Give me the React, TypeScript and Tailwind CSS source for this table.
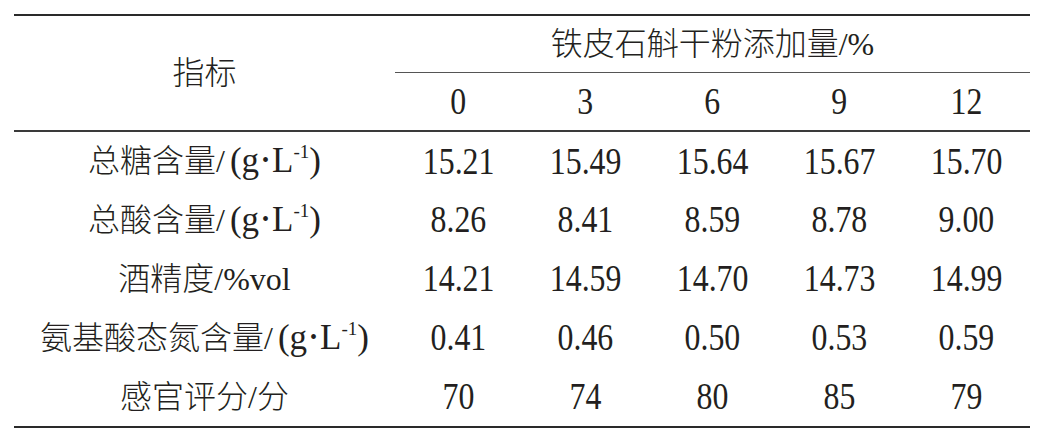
import React from "react";

const serif = "font-[family-name:'Liberation_Serif','Noto_Sans_CJK_SC',serif]";

const Unit = () => (
  <span className="text-[35px]">
    <span className="ml-[5px]">(g</span>
    <span className="mx-[3px] text-[20px] align-[5px]">•</span>
    <span>L</span>
    <span className="text-[19px] align-[14px]">-1</span>
    <span>)</span>
  </span>
);

const rows: { label: React.ReactNode; values: string[] }[] = [
  { label: <>总糖含量/<Unit /></>, values: ["15.21", "15.49", "15.64", "15.67", "15.70"] },
  { label: <>总酸含量/<Unit /></>, values: ["8.26", "8.41", "8.59", "8.78", "9.00"] },
  { label: <>酒精度/%vol</>, values: ["14.21", "14.59", "14.70", "14.73", "14.99"] },
  { label: <>氨基酸态氮含量/<Unit /></>, values: ["0.41", "0.46", "0.50", "0.53", "0.59"] },
  { label: <>感官评分/分</>, values: ["70", "74", "80", "85", "79"] },
];

const levels = ["0", "3", "6", "9", "12"];

const Num = ({ children }: { children: React.ReactNode }) => (
  <span className={`inline-block scale-x-[0.86] text-[37px] ${serif}`}>{children}</span>
);

export default function App() {
  return (
    <div className={`w-[1043px] h-[448px] bg-white pt-[14px] pl-[14px] text-[#231f20] ${serif}`}>
      <div className="w-[1016px] border-t-2 border-b-2 border-[#2a2a2a]">
        <div className="grid grid-cols-[381px_repeat(5,127px)] border-b-2 border-[#3a3a3a]">
          <div className={`row-span-2 flex items-center justify-center text-[32px] font-extralight ${serif}`}>指标</div>
          <div className={`col-span-5 h-[57px] flex items-center justify-center border-b border-[#555] text-[32px] font-extralight ${serif}`}>
            铁皮石斛干粉添加量/%
          </div>
          {levels.map((l) => (
            <div key={l} className="h-[57px] flex items-center justify-center">
              <Num>{l}</Num>
            </div>
          ))}
        </div>
        <div className="grid grid-cols-[381px_repeat(5,127px)]">
          {rows.map((r, i) => (
            <React.Fragment key={i}>
              <div className={`h-[58.8px] flex items-center justify-center text-[32px] font-extralight whitespace-nowrap ${serif}`}>
                {r.label}
              </div>
              {r.values.map((v, j) => (
                <div key={j} className="h-[58.8px] flex items-center justify-center">
                  <Num>{v}</Num>
                </div>
              ))}
            </React.Fragment>
          ))}
        </div>
      </div>
    </div>
  );
}
